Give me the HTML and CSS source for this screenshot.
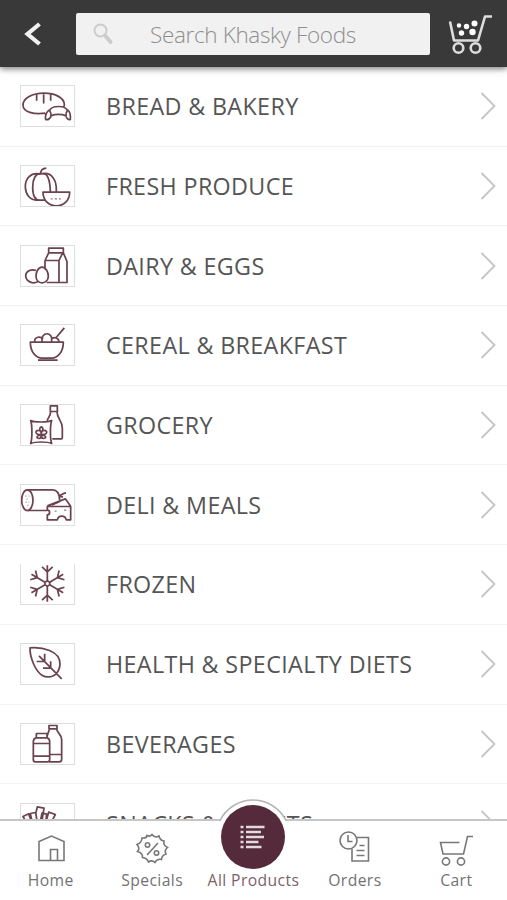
FILE: index.html
```html
<!DOCTYPE html>
<html lang="en">
<head>
<meta charset="utf-8">
<title>Khasky Foods</title>
<link rel="stylesheet" href="styles.css">
</head>
<body>
<div class="app">
  <header class="topbar">
    <svg class="back" viewBox="0 0 20 26"><path d="M16.500 3 4.500 13l12 10"/></svg>
    <div class="search">
      <svg class="search-icon" viewBox="0 0 20 22"><circle cx="7.500" cy="7.500" r="6"/><path class="handle" d="m12.500 13 5 6"/></svg>
      <span>Search Khasky Foods</span>
    </div>
    <svg class="basket" viewBox="0 0 46 42">
      <path d="M2 7.500 6 26.500H30L37 2.500H44"/><circle cx="10.500" cy="34" r="4.800"/><circle cx="27.500" cy="34" r="4.800"/>
      <g class="dots"><circle cx="11" cy="11.500" r="2.200"/><circle cx="18.500" cy="12.500" r="2.700"/><circle cx="26.500" cy="9.500" r="3"/><circle cx="13.500" cy="19" r="2.700"/><circle cx="24.500" cy="18" r="3.200"/></g>
    </svg>
  </header>

  <main class="list">
    <div class="row">
      <svg class="thumb" viewBox="0 0 165 123"><path d="M76 83C40 87 10 80 9 60 8 38 38 23 72 23s61 14 61 35c0 3-1 5-2 7M50 26v20M71 26v28M92 26v20M89 75c6-16 47-16 53 0M89 75c4 6 5 12 3 17M142 75c-4 6-5 12-3 17M92 91c14-5 33-5 47 0M88 73c-8 6-13 18-11 29 6 2 12-2 16-9M143 73c8 6 9 18 8 29-6 2-10-2-13-9"/></svg>
      <span class="label">BREAD &amp; BAKERY</span><svg class="chev" viewBox="0 0 16 30"><path d="m1.500 2 13 13-13 13"/></svg>
    </div>
    <div class="row">
      <svg class="thumb" viewBox="0 0 165 123"><path d="M62 26c-32-7-47 15-46 39 1 22 14 38 32 39h25M66 25c-20-6-28 18-28 40 0 20 6 39 22 39h14M66 25c16-4 24 16 25 53M66 25c28-7 45 18 43 53M62 24c0-11 6-15 17-16M69 80h80c0 25-18 41-40 41S69 105 69 80Z"/><path class="fine" d="M92 100h6M104 100h7M117 100h6"/></svg>
      <span class="label">FRESH PRODUCE</span><svg class="chev" viewBox="0 0 16 30"><path d="m1.500 2 13 13-13 13"/></svg>
    </div>
    <div class="row">
      <svg class="thumb" viewBox="0 0 165 123"><path d="M75 72V45h42v66H80M75 45 86 22h42l-11 23v66h24V48L130 22M86 22V8h44v14M117 111V45M48 75c-15-5-31 2-31 16 2 19 23 25 36 18M66 65c-12 0-18 16-18 27 0 12 8 20 18 20s19-8 19-20c0-11-7-27-19-27Z"/></svg>
      <span class="label">DAIRY &amp; EGGS</span><svg class="chev" viewBox="0 0 16 30"><path d="m1.500 2 13 13-13 13"/></svg>
    </div>
    <div class="row">
      <svg class="thumb" viewBox="0 0 165 123"><path d="M31 53h99c0 27-15 48-36 48H67C46 101 31 80 31 53ZM54 107h59M44 52c-1-16 18-18 25-8M66 51c-5-31 35-31 29 0M94 43c11-7 22-3 23 9M106 42l27-32"/></svg>
      <span class="label">CEREAL &amp; BREAKFAST</span><svg class="chev" viewBox="0 0 16 30"><path d="m1.500 2 13 13-13 13"/></svg>
    </div>
    <div class="row">
      <svg class="thumb" viewBox="0 0 165 123"><path d="M32 48c10 6 52 6 63 0-5 14-5 54 0 69-13-6-50-6-63 0 5-15 5-55 0-69ZM91 4h21v17H91ZM92 21c0 14-8 18-11 28M111 21c0 23 16 26 16 50v29q0 3-3 3H97M64 103V82M64 90c-20 2-20-13-8-12 5 0 8 5 8 12 20 2 20-13 8-12-5 0-8 5-8 12M64 82c-8-4-5-13 0-15 5 2 8 11 0 15M64 92c-15-1-17 10-6 10 4-1 6-5 6-10 15-1 17 10 6 10-4-1-6-5-6-10"/></svg>
      <span class="label">GROCERY</span><svg class="chev" viewBox="0 0 16 30"><path d="m1.500 2 13 13-13 13"/></svg>
    </div>
    <div class="row">
      <svg class="thumb" viewBox="0 0 165 123"><ellipse cx="22" cy="47" rx="17" ry="31"/><path d="M22 16h76c13 0 20 13 21 30M22 78h60M82 64l54-21 16 22M82 66h70v40h-13c-4-15-24-15-27 0H82V91c9 0 9-14 0-14ZM96 61l25-11M118 34c7-2 10-8 20-9M121 36l8 2"/><path class="fine" d="M16 35h3M26 35h2M20 44h3M17 53h3M26 53h2M22 62h3M104 80h6M132 77h7"/></svg>
      <span class="label">DELI &amp; MEALS</span><svg class="chev" viewBox="0 0 16 30"><path d="m1.500 2 13 13-13 13"/></svg>
    </div>
    <div class="row">
      <svg class="thumb open" viewBox="0 0 165 123"><path d="M82 52V5M66 10l16 15 16-15"/><g transform="rotate(60 82 60)"><path d="M82 52V5M66 10l16 15 16-15"/></g><g transform="rotate(120 82 60)"><path d="M82 52V5M66 10l16 15 16-15"/></g><g transform="rotate(180 82 60)"><path d="M82 52V5M66 10l16 15 16-15"/></g><g transform="rotate(240 82 60)"><path d="M82 52V5M66 10l16 15 16-15"/></g><g transform="rotate(300 82 60)"><path d="M82 52V5M66 10l16 15 16-15"/></g><path d="m82 52 7 4v8l-7 4-7-4v-8Z"/></svg>
      <span class="label">FROZEN</span><svg class="chev" viewBox="0 0 16 30"><path d="m1.500 2 13 13-13 13"/></svg>
    </div>
    <div class="row">
      <svg class="thumb" viewBox="0 0 165 123"><path d="M30 13c35-3 91 8 90 49-1 19-9 28-17 33-9 6-25 8-37 0C47 84 29 42 30 13ZM57 37l68 69M74 31v22M50 54h24M92 53v21H69"/></svg>
      <span class="label">HEALTH &amp; SPECIALTY DIETS</span><svg class="chev" viewBox="0 0 16 30"><path d="m1.500 2 13 13-13 13"/></svg>
    </div>
    <div class="row">
      <svg class="thumb" viewBox="0 0 165 123"><path d="M49 30h32v13H49ZM49 43c-6 1-9 5-9 12v54q0 6 6 6h37q6 0 6-6V55c0-7-3-11-8-12M40 60h49M40 98h49M87 6h24v10H87ZM88 16c0 9-7 15-7 27M110 16c0 12 15 16 15 32v59q0 8-8 8H87M89 93h36"/></svg>
      <span class="label">BEVERAGES</span><svg class="chev" viewBox="0 0 16 30"><path d="m1.500 2 13 13-13 13"/></svg>
    </div>
    <div class="row">
      <svg class="thumb" viewBox="0 0 165 123"><path d="M20 58 9 39l17-8 10 27M37 58 31 30l16-3 5 31M48 27l4-17 20 4-7 44M60 58l6-29 14 3-3 26M77 58l9-32 20 7-13 25"/></svg>
      <span class="label">SNACKS &amp; SWEETS</span><svg class="chev" viewBox="0 0 16 30"><path d="m1.500 2 13 13-13 13"/></svg>
    </div>
  </main>

  <nav class="tabs">
    <svg class="bump" viewBox="0 0 76 24"><path class="fill" d="M4.500 24V21.500A36.800 36.800 0 0 1 71.500 21.500V24Z"/><path class="line" d="M4.800 21A36.800 36.800 0 0 1 71.200 21"/></svg>
    <a class="tab"><svg class="ico" viewBox="0 0 36 36"><path d="M6 29.500V10.500L18.500 5 31 10.500V29.500ZM17.500 29V18.500H24.500V29"/></svg><span>Home</span></a>
    <a class="tab"><svg class="ico" viewBox="0 0 36 36"><path d="M18 3.500q3 4 7 1.500 1 4.500 5 5-1 4.500 3.500 6.500-3.500 3-1.500 6.500-4.500 1.500-4.500 5.500-4.500-1-6.500 3-3-3-6.500-.500-1.500-4-6-4.500.500-4.500-5-6 3-3-.500-7Q8 11.500 8 7q4.500.500 5-2.500 3 1.500 5-1Z"/><path d="M24 12 13 24"/><circle cx="13.500" cy="14" r="2.200"/><circle cx="22.500" cy="22" r="2.200"/></svg><span>Specials</span></a>
    <a class="tab active"><span class="disc"><svg viewBox="0 0 26 26"><path d="M.500 3h3M.500 8h3M.500 13h3M.500 18h3M.500 23h3M6 3h18.500M6 8h15M6 13h18M6 18h12.500M6 23h15.500"/></svg></span><span>All Products</span></a>
    <a class="tab"><svg class="ico" viewBox="0 0 36 36"><circle cx="11.500" cy="9.500" r="8.500"/><path d="M11 4V10.500H15.500M20 6.500H31.500V30H15V18M22.500 14.500h5M19.500 19.500h8M19.500 24.500h8"/></svg><span>Orders</span></a>
    <a class="tab"><svg class="ico" viewBox="0 0 36 36"><path d="M21.500 11.500H2.500L5 23H25.500L29.500 5.500H35"/><circle cx="8" cy="30.500" r="3.600"/><circle cx="23" cy="30.500" r="3.600"/></svg><span>Cart</span></a>
  </nav>
</div>
</body>
</html>
```
FILE: styles.css
```css
* { box-sizing: border-box; }
body { margin: 0; background: #fff; font-family: "Open Sans", "Noto Sans", sans-serif; }
svg { fill: none; flex: none; overflow: visible; }
.app { display: flex; flex-direction: column; height: 900px; overflow: hidden; }

.topbar { position: relative; z-index: 2; flex: none; display: flex; align-items: flex-start; height: 67px; background: #393939; box-shadow: 0 2px 6px rgba(0,0,0,.5); }
.back { width: 20px; height: 26px; margin: 21px 33px 0 23px; stroke: #f2f2f2; stroke-width: 4.200; }
.search { display: flex; align-items: center; width: 354px; height: 42px; margin-top: 13px; border-radius: 2px; background: #f1f1f1; color: #8e8e8e; font-size: 22.500px; letter-spacing: -.350px; font-weight: 300; white-space: nowrap; }
.search-icon { width: 20px; height: 22px; margin: 0 37px 0 17px; stroke: #ccc; stroke-width: 2; }
.search-icon .handle { stroke-width: 4; stroke-linecap: round; }
.basket { width: 46px; height: 42px; margin: 14px 0 0 18px; stroke: #ddd; stroke-width: 2.600; stroke-linejoin: round; }
.dots { fill: #fff; stroke: none; }

.list { flex: 1; min-height: 0; overflow: hidden; }
.row { display: flex; align-items: center; height: 79.700px; padding: 0 11px 0 20px; border-bottom: 1px solid #f3f3f3; }
.thumb { width: 55px; height: 42px; outline: 1px solid #dedede; outline-offset: -1px; stroke: #6b4350; stroke-width: 5.200; stroke-linejoin: round; overflow: hidden; }
.thumb.open { clip-path: inset(1px 0 0 0); }
.thumb .fine { stroke-width: 4; stroke: #9a7e88; }
.label { flex: 1; margin-left: 31px; color: #555; font-size: 23.300px; letter-spacing: .360px; white-space: nowrap; }
.chev { width: 16px; height: 30px; stroke: #c4c4c4; stroke-width: 1.800; }

.tabs { position: relative; z-index: 1; flex: none; display: grid; grid-template-columns: repeat(5, 1fr); height: 81px; border-top: 2px solid #c6c6c6; background: #fff; }
.bump { position: absolute; left: 215px; top: -21px; width: 76px; height: 24px; }
.bump .fill { fill: #fff; }
.bump .line { stroke: #b5b5b5; stroke-width: 1.500; }
.tab { position: relative; display: flex; flex-direction: column; align-items: center; color: #727272; font-size: 15.700px; letter-spacing: .400px; line-height: 20px; white-space: nowrap; }
.ico { width: 36px; height: 36px; margin: 10px 0 3px; stroke: #777; stroke-width: 1.600; }
.disc { display: flex; align-items: center; justify-content: center; width: 64px; height: 64px; margin: -16px 0 1px; border-radius: 50%; background: #552b3b; }
.disc svg { width: 26px; height: 26px; stroke: #e3d8dc; stroke-width: 2.400; }
.active { color: #7d5f6a; }
```
